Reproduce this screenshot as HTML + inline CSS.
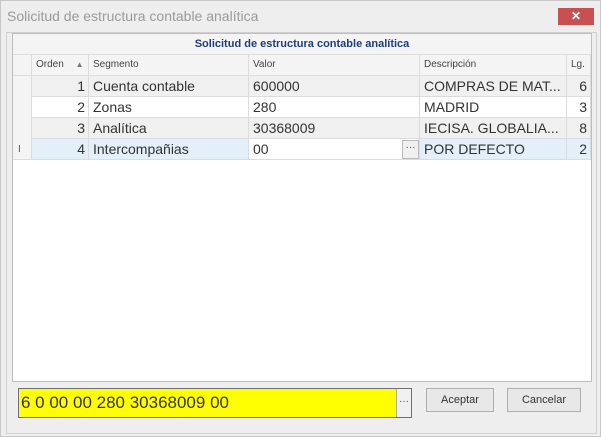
<!DOCTYPE html>
<html><head><meta charset="utf-8"><style>
*{box-sizing:border-box;margin:0;padding:0}
body{width:601px;height:437px;background:#eeeeee;font-family:"Liberation Sans",sans-serif;position:relative;overflow:hidden;border:1px solid #c8c8c8}
.a{position:absolute}
.title{left:6px;top:7px;font-size:14px;color:#9a9a9a}
.close{left:557px;top:7px;width:36px;height:17px;background:#c75050;color:#fff;font-size:12px;font-weight:bold;text-align:center;line-height:17px}
.panel{left:5px;top:31px;width:591px;height:402px;border:1px solid #d0d0d0}
.grid{left:11px;top:32px;width:580px;height:349px;background:#fff;border:1px solid #bdbdbd}
.gh{left:12px;top:33px;width:578px;height:21px;background:#f4f4f4;border-bottom:1px solid #dcdcdc;color:#1e3f7a;font-weight:bold;font-size:11px;text-align:center;line-height:21px}
.c{position:absolute;height:21px;border-right:1px solid #dcdcdc;border-bottom:1px solid #dcdcdc;white-space:nowrap;overflow:hidden;color:#333}
.h{font-size:10px;line-height:20px;padding-left:4px;background:#f4f4f4;color:#444}
.r{font-size:14px;line-height:21px;padding-left:4px}
.n{text-align:right;padding-right:3px}
</style></head><body>
<div class="a title">Solicitud de estructura contable analítica</div>
<div class="a close">✕</div>
<div class="a panel"></div>
<div class="a grid"></div>
<div class="a gh">Solicitud de estructura contable analítica</div>
<div class="c h" style="left:12px;top:54px;width:19px"></div>
<div class="c h" style="left:31px;top:54px;width:57px">Orden <span style="font-size:8px;color:#777;margin-left:9px">▲</span></div>
<div class="c h" style="left:88px;top:54px;width:160px">Segmento</div>
<div class="c h" style="left:248px;top:54px;width:171px">Valor</div>
<div class="c h" style="left:419px;top:54px;width:147px">Descripción</div>
<div class="c h" style="left:566px;top:54px;width:24px">Lg.</div>

<div class="c" style="left:12px;top:75px;width:19px;height:84px;background:#f4f4f4"></div>
<div class="c" style="left:12px;top:138px;width:19px;background:#f4f4f4;font-size:10px;line-height:21px;padding-left:5px;color:#555">I</div>

<div class="c r n" style="left:31px;top:75px;width:57px;background:#f0f0f0">1</div>
<div class="c r" style="left:88px;top:75px;width:160px;background:#f0f0f0">Cuenta contable</div>
<div class="c r" style="left:248px;top:75px;width:171px;background:#f0f0f0">600000</div>
<div class="c r" style="left:419px;top:75px;width:147px;background:#f0f0f0">COMPRAS DE MAT...</div>
<div class="c r n" style="left:566px;top:75px;width:24px;background:#f0f0f0">6</div>

<div class="c r n" style="left:31px;top:96px;width:57px">2</div>
<div class="c r" style="left:88px;top:96px;width:160px">Zonas</div>
<div class="c r" style="left:248px;top:96px;width:171px">280</div>
<div class="c r" style="left:419px;top:96px;width:147px">MADRID</div>
<div class="c r n" style="left:566px;top:96px;width:24px">3</div>

<div class="c r n" style="left:31px;top:117px;width:57px;background:#f0f0f0">3</div>
<div class="c r" style="left:88px;top:117px;width:160px;background:#f0f0f0">Analítica</div>
<div class="c r" style="left:248px;top:117px;width:171px;background:#f0f0f0">30368009</div>
<div class="c r" style="left:419px;top:117px;width:147px;background:#f0f0f0">IECISA. GLOBALIA...</div>
<div class="c r n" style="left:566px;top:117px;width:24px;background:#f0f0f0">8</div>

<div class="c r n" style="left:31px;top:138px;width:57px;background:#e3eff9">4</div>
<div class="c r" style="left:88px;top:138px;width:160px;background:#e3eff9">Intercompañias</div>
<div class="c r" style="left:248px;top:138px;width:171px;background:#fff">00</div>
<div class="a" style="left:401px;top:139px;width:17px;height:19px;border:1px solid #bbb;background:#f0f0f0;font-size:10px;text-align:center;line-height:14px;color:#444">···</div>
<div class="c r" style="left:419px;top:138px;width:147px;background:#e3eff9">POR DEFECTO</div>
<div class="c r n" style="left:566px;top:138px;width:24px;background:#e3eff9">2</div>

<div class="a" style="left:17px;top:387px;width:394px;height:30px;border:1px solid #707070;background:#ffff00"></div>
<div class="a" style="left:20px;top:387px;font-size:17px;line-height:30px;color:#333">6 0 00 00 280 30368009 00</div>
<div class="a" style="left:395px;top:388px;width:15px;height:28px;background:#f0f0f0;border-left:1px solid #aaa;font-size:10px;text-align:center;line-height:26px;color:#444">···</div>
<div class="a" style="left:425px;top:387px;width:68px;height:24px;border:1px solid #adadad;background:#e8e8e8;font-size:11px;text-align:center;line-height:22px;color:#333">Aceptar</div>
<div class="a" style="left:506px;top:387px;width:74px;height:24px;border:1px solid #adadad;background:#e8e8e8;font-size:11px;text-align:center;line-height:22px;color:#333">Cancelar</div>
</body></html>
